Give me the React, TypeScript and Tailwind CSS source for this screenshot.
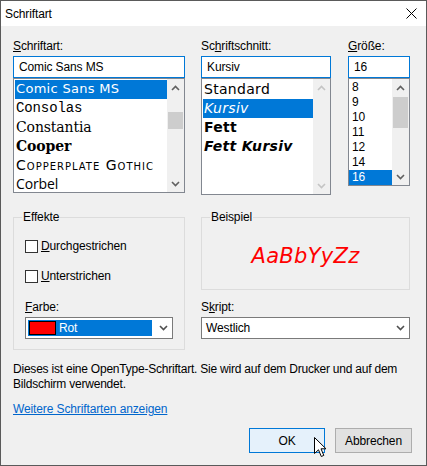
import React from 'react';

const ui = { fontFamily: '"Segoe UI", "Liberation Sans", Arial, sans-serif' };

function Chevron({ dir, color = '#606060' }: { dir: 'up' | 'down'; color?: string }) {
  return (
    <svg width="9" height="6" viewBox="0 0 9 6">
      <polyline
        points={dir === 'up' ? '1,5 4.5,1.5 8,5' : '1,1 4.5,4.5 8,1'}
        fill="none"
        stroke={color}
        strokeWidth="1.6"
      />
    </svg>
  );
}

// vertical scrollbar at the right side of a listbox
function ScrollBar({ thumbTop, thumbH, disabled }: { thumbTop?: number; thumbH?: number; disabled?: boolean }) {
  const c = disabled ? '#c4c4c4' : '#606060';
  return (
    <div className="w-[17px] h-full bg-[#f0f0f0] flex flex-col">
      <div className="h-[17px] flex items-center justify-center">
        <Chevron dir="up" color={c} />
      </div>
      <div className="flex-1 flex flex-col">
        {!disabled && <div style={{ marginTop: thumbTop, height: thumbH }} className="mx-[1px] bg-[#cdcdcd]" />}
      </div>
      <div className="h-[17px] flex items-center justify-center">
        <Chevron dir="down" color={c} />
      </div>
    </div>
  );
}

function Label({ text, u }: { text: string; u: number }) {
  return (
    <div className="h-[16px] leading-[16px] text-[12px] text-black mb-[2px]">
      {text.slice(0, u)}
      <u>{text[u]}</u>
      {text.slice(u + 1)}
    </div>
  );
}

function Input({ value }: { value: string }) {
  return (
    <div className="h-[22px] border border-[#0078d7] bg-white px-[5px] flex items-center text-[12px] text-black">
      {value}
    </div>
  );
}

function Combo({ children, inset }: { children: React.ReactNode; inset?: boolean }) {
  return (
    <div className="h-[22px] border border-[#7a7a7a] bg-white flex items-center text-[12px]">
      <div className={`flex-1 h-full ${inset ? 'p-[2px]' : 'px-[3px]'} flex items-center`}>{children}</div>
      <div className="w-[18px] flex items-center justify-center">
        <Chevron dir="down" color="#505050" />
      </div>
    </div>
  );
}

function CheckRow({ text }: { text: string }) {
  return (
    <div className="h-[16px] flex items-center gap-[3px] text-[12px] text-black">
      <div className="w-[13px] h-[13px] border border-[#333] bg-white" />
      <span>
        <u>{text[0]}</u>
        {text.slice(1)}
      </span>
    </div>
  );
}

const fonts = [
  { name: 'Comic Sans MS', cls: 'text-[13px] tracking-[0.3px]', ff: '"DejaVu Sans", sans-serif' },
  { name: 'Consolas', cls: 'text-[14px]', ff: '"Liberation Mono", monospace' },
  { name: 'Constantia', cls: 'text-[14px]', ff: '"DejaVu Serif", serif' },
  { name: 'Cooper', cls: 'text-[14px] font-black', ff: '"DejaVu Serif", serif' },
  { name: 'Copperplate Gothic', cls: 'text-[14px] tracking-[1px] [font-variant:small-caps]', ff: '"DejaVu Sans", sans-serif' },
  { name: 'Corbel', cls: 'text-[14px]', ff: '"Open Sans", sans-serif' },
];

const styles = [
  { name: 'Standard', cls: '' },
  { name: 'Kursiv', cls: 'italic' },
  { name: 'Fett', cls: 'font-bold' },
  { name: 'Fett Kursiv', cls: 'font-bold italic' },
];

const sizes = ['8', '9', '10', '11', '12', '14', '16'];

export default function App() {
  return (
    <div style={ui} className="relative w-[427px] h-[466px] border border-[#5a5a5a] bg-[#f0f0f0] flex flex-col overflow-hidden tracking-[-0.12px]">
      {/* Title bar */}
      <div className="h-[25px] bg-white flex items-center pl-[4px] pr-[9px]">
        <span className="text-[12px] text-black">Schriftart</span>
        <svg className="ml-auto" width="11" height="11" viewBox="0 0 11 11">
          <path d="M0.5 0.5 L10.5 10.5 M10.5 0.5 L0.5 10.5" stroke="#000" strokeWidth="1" />
        </svg>
      </div>

      <div className="flex-1 px-[12px] pt-[12px] flex flex-col">
        {/* Top row: lists */}
        <div className="flex items-start">
          <div className="w-[172px]">
            <Label text="Schriftart:" u={0} />
            <Input value="Comic Sans MS" />
            <div className="h-[115px] border border-[#828790] bg-white flex">
              <div className="flex-1 pt-[1px] pl-[1px] overflow-hidden">
                {fonts.map((f, i) => (
                  <div
                    key={f.name}
                    style={{ fontFamily: f.ff }}
                    className={`h-[19px] leading-[18px] pl-[1px] whitespace-nowrap ${f.cls} ${i === 0 ? 'bg-[#0078d7] text-white' : 'text-black'}`}
                  >
                    {f.name}
                  </div>
                ))}
              </div>
              <ScrollBar thumbTop={16} thumbH={17} />
            </div>
          </div>

          <div className="w-[130px] ml-[16px]">
            <Label text="Schriftschnitt:" u={2} />
            <Input value="Kursiv" />
            <div className="h-[117px] border border-[#828790] bg-white flex">
              <div className="flex-1 pt-[1px] pl-[1px] overflow-hidden">
                {styles.map((s, i) => (
                  <div
                    key={s.name}
                    style={{ fontFamily: '"DejaVu Sans", sans-serif' }}
                    className={`h-[19px] leading-[19px] pl-[1px] text-[14px] tracking-[0.3px] whitespace-nowrap ${s.cls} ${i === 1 ? 'bg-[#0078d7] text-white' : 'text-black'}`}
                  >
                    {s.name}
                  </div>
                ))}
              </div>
              <ScrollBar disabled />
            </div>
          </div>

          <div className="w-[62px] ml-[17px]">
            <Label text="Größe:" u={0} />
            <Input value="16" />
            <div className="h-[108px] border border-[#828790] bg-white flex">
              <div className="flex-1 pt-[1px] overflow-hidden">
                {sizes.map((s, i) => (
                  <div
                    key={s}
                    className={`h-[15px] leading-[15px] pl-[3px] text-[12px] ${i === 6 ? 'bg-[#0078d7] text-white' : 'text-black'}`}
                  >
                    {s}
                  </div>
                ))}
              </div>
              <ScrollBar thumbTop={1} thumbH={31} />
            </div>
          </div>
        </div>

        {/* Middle row: effects / sample */}
        <div className="flex items-start mt-[14px]">
          <fieldset className="w-[172px] h-[141px] border border-[#dcdcdc]">
            <legend className="ml-[8px] px-[1px] h-[16px] leading-[16px] text-[12px] text-black">Effekte</legend>
            <div className="px-[11px] flex flex-col">
              <div className="mt-[13px]">
                <CheckRow text="Durchgestrichen" />
              </div>
              <div className="mt-[14px]">
                <CheckRow text="Unterstrichen" />
              </div>
              <div className="mt-[15px]">
                <Label text="Farbe:" u={0} />
                <div className="mt-[2px]">
                  <Combo inset>
                    <div className="flex-1 h-full bg-[#0078d7] flex items-center gap-[3px] pl-[1px]">
                      <div className="w-[27px] h-[14px] bg-[#ff0000] border border-black" />
                      <span className="text-white">Rot</span>
                    </div>
                  </Combo>
                </div>
              </div>
            </div>
          </fieldset>

          <div className="w-[209px] ml-[16px] flex flex-col">
            <fieldset className="h-[81px] border border-[#dcdcdc]">
              <legend className="ml-[8px] px-[1px] h-[16px] leading-[16px] text-[12px] text-black">Beispiel</legend>
              <div className="h-[63px] flex items-center justify-center">
                <span
                  style={{ fontFamily: '"DejaVu Sans", sans-serif' }}
                  className="text-[21px] italic text-[#ff0000] tracking-[0.3px]"
                >
                  AaBbYyZz
                </span>
              </div>
            </fieldset>
            <div className="mt-[9px]">
              <Label text="Skript:" u={1} />
              <div className="mt-[2px]">
                <Combo>
                  <span className="text-black pl-[1px]">Westlich</span>
                </Combo>
              </div>
            </div>
          </div>
        </div>

        {/* Description */}
        <p className="mt-[12px] text-[12px] leading-[15px] text-black tracking-[-0.22px]">
          Dieses ist eine OpenType-Schriftart. Sie wird auf dem Drucker und auf dem
          <br />
          Bildschirm verwendet.
        </p>
        <a className="mt-[10px] text-[12px] leading-[15px] text-[#0066cc] underline self-start">
          Weitere Schriftarten anzeigen
        </a>

        {/* Buttons */}
        <div className="mt-[11px] flex justify-end gap-[10px] mr-[2px]">
          <div className="relative w-[76px] h-[25px] border border-[#0078d7] bg-[#e5f1fb] flex items-center justify-center text-[12px] text-black">
            OK
            <svg className="absolute left-[64px] top-[8px]" width="13" height="21" viewBox="0 0 13 21">
              <path d="M0.5 0.5 L0.5 16.5 L4.5 12.8 L7.3 19.5 L9.8 18.4 L7 11.8 L12 11.8 Z" fill="#fff" stroke="#000" strokeWidth="1" />
            </svg>
          </div>
          <div className="w-[77px] h-[25px] border border-[#adadad] bg-[#e1e1e1] flex items-center justify-center text-[12px] text-black">
            Abbrechen
          </div>
        </div>
      </div>
    </div>
  );
}
